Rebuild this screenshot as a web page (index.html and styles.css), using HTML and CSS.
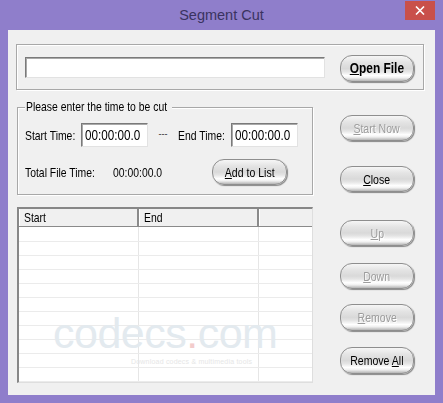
FILE: index.html
```html
<!DOCTYPE html>
<html>
<head>
<meta charset="utf-8">
<link rel="stylesheet" href="styles.css">
</head>
<body>
<div class="window">
  <div class="titlebar">
    <div class="title">Segment Cut</div>
    <div class="close-btn">
      <svg width="10" height="9" viewBox="0 0 10 9"><path d="M1 0.5 L9 8.5 M9 0.5 L1 8.5" stroke="#fff" stroke-width="1.6" fill="none"/></svg>
    </div>
  </div>
  <div class="client">
    <div class="filebox">
      <div class="field file-field"></div>
      <div class="btn btn-open"><span class="t"><u>O</u>pen File</span></div>
    </div>
    <div class="main">
      <div class="leftcol">
        <div class="group">
          <div class="legend"><span class="t tl">Please enter the time to be cut</span></div>
          <div class="row row1">
            <span class="lbl lbl-start"><span class="t tl">Start Time:</span></span>
            <div class="field time-field"><span class="t tl">00:00:00.0</span></div>
            <span class="dash">---</span>
            <span class="lbl lbl-end"><span class="t tl">End Time:</span></span>
            <div class="field time-field"><span class="t tl">00:00:00.0</span></div>
          </div>
          <div class="row row2">
            <span class="lbl lbl-total"><span class="t tl">Total File Time:</span></span>
            <span class="lbl lbl-totalval"><span class="t tl">00:00:00.0</span></span>
            <div class="btn btn-add"><span class="t"><u>A</u>dd to List</span></div>
          </div>
        </div>
        <div class="list">
          <div class="list-head">
            <div class="hcell c1"><span class="t tl">Start</span></div>
            <div class="hcell c2"><span class="t tl">End</span></div>
            <div class="hcell c3"></div>
          </div>
          <div class="list-body">
            <div class="lrow"><div class="cell c1"></div><div class="cell c2"></div><div class="cell c3"></div></div>
            <div class="lrow"><div class="cell c1"></div><div class="cell c2"></div><div class="cell c3"></div></div>
            <div class="lrow"><div class="cell c1"></div><div class="cell c2"></div><div class="cell c3"></div></div>
            <div class="lrow"><div class="cell c1"></div><div class="cell c2"></div><div class="cell c3"></div></div>
            <div class="lrow"><div class="cell c1"></div><div class="cell c2"></div><div class="cell c3"></div></div>
            <div class="lrow"><div class="cell c1"></div><div class="cell c2"></div><div class="cell c3"></div></div>
            <div class="lrow"><div class="cell c1"></div><div class="cell c2"></div><div class="cell c3"></div></div>
            <div class="lrow"><div class="cell c1"></div><div class="cell c2"></div><div class="cell c3"></div></div>
            <div class="lrow"><div class="cell c1"></div><div class="cell c2"></div><div class="cell c3"></div></div>
            <div class="lrow"><div class="cell c1"></div><div class="cell c2"></div><div class="cell c3"></div></div>
            <div class="lrow last"><div class="cell c1"></div><div class="cell c2"></div><div class="cell c3"></div></div>
          </div>
          <div class="watermark">
            <div class="wm-main">codecs<span class="wm-dot">.</span>com</div>
            <div class="wm-sub">Download codecs &amp; multimedia tools</div>
          </div>
        </div>
      </div>
      <div class="rightcol">
        <div class="btn disabled b-start"><span class="t"><u>S</u>tart Now</span></div>
        <div class="btn b-close"><span class="t"><u>C</u>lose</span></div>
        <div class="btn disabled b-up"><span class="t"><u>U</u>p</span></div>
        <div class="btn disabled b-down"><span class="t"><u>D</u>own</span></div>
        <div class="btn disabled b-remove"><span class="t"><u>R</u>emove</span></div>
        <div class="btn b-removeall"><span class="t">Remove <u>A</u>ll</span></div>
      </div>
    </div>
  </div>
</div>
</body>
</html>
```

FILE: styles.css
```css
* { box-sizing: border-box; }
html, body { margin: 0; padding: 0; }
body {
  width: 443px;
  height: 403px;
  overflow: hidden;
  font-family: "Liberation Sans", Arial, sans-serif;
  font-size: 13px;
  color: #000;
}
.t {
  display: inline-block;
  white-space: nowrap;
  transform: scaleX(0.8);
  transform-origin: center center;
}
.tl { transform-origin: left center; }
.window {
  width: 443px;
  height: 403px;
  background: #8f7ecb;
  display: flex;
  flex-direction: column;
}
.titlebar {
  height: 30px;
  display: grid;
  grid-template-columns: 1fr auto 1fr;
  align-items: start;
}
.title {
  grid-column: 2;
  font-size: 14.5px;
  color: #3a3360;
  padding-top: 7px;
  line-height: 17px;
}
.close-btn {
  grid-column: 3;
  justify-self: end;
  margin-right: 8px;
  margin-top: 1px;
  width: 30px;
  height: 19px;
  background: #c9504b;
  display: flex;
  align-items: center;
  justify-content: center;
}
.client {
  margin: 0 8px;
  height: 365px;
  background: #f0f0f0;
  padding: 14px 11px 0 8px;
}
.filebox {
  height: 46px;
  border: 1px solid #a8a8a8;
  box-shadow: inset 1px 1px 0 #fff, 1px 1px 0 #fff;
  display: flex;
  align-items: flex-start;
  padding-left: 8px;
}
.field {
  background: #fff;
  border-style: solid;
  border-width: 1px;
  border-color: #7a7a7a #e2e2e2 #e2e2e2 #7a7a7a;
  box-shadow: inset 1px 1px 0 #a9a9a9;
}
.file-field {
  width: 300px;
  height: 21px;
  margin-top: 12px;
}
.btn {
  width: 74px;
  height: 26px;
  border: 1px solid #8e8e8e;
  border-radius: 12px;
  background: linear-gradient(to bottom, #f6f6f6 0%, #e4e4e4 25%, #d9d9d9 50%, #e4e4e4 62%, #ffffff 78%, #f0f0f0 87%, #b4b4b4 100%);
  box-shadow: 1px 1px 1px #888;
  display: flex;
  align-items: center;
  justify-content: center;
  font-size: 13px;
  line-height: 15px;
  color: #000;
}
.btn .t { transform: scaleX(0.81); }
.btn.disabled {
  color: #9c9c9c;
  text-shadow: 1px 1px 0 #fff;
}
.btn-open {
  margin-left: 15px;
  margin-top: 10px;
  height: 27px;
  font-weight: bold;
  font-size: 14px;
}
.btn-open .t { transform: scaleX(0.85); }
.main {
  display: flex;
  margin-top: 17px;
}
.leftcol {
  margin-left: 1px;
  width: 296px;
  display: flex;
  flex-direction: column;
}
.group {
  position: relative;
  height: 88px;
  border: 1px solid #a8a8a8;
  box-shadow: inset 1px 1px 0 #fff, 1px 1px 0 #fff;
  padding: 15px 0 0 7px;
}
.legend {
  position: absolute;
  top: -9px;
  left: 7px;
  width: 147px;
  height: 16px;
  padding-left: 1px;
  background: #f0f0f0;
  line-height: 16px;
}
.legend .t { transform: scaleX(0.8); }
.row {
  display: flex;
  align-items: center;
}
.row1 { height: 24px; }
.row2 { margin-top: 12px; height: 26px; }
.lbl { line-height: 15px; white-space: nowrap; }
.lbl-start { width: 56px; }
.lbl-end { width: 53px; }
.lbl-total { width: 88px; }
.lbl-totalval { width: 99px; }
.dash {
  width: 30px;
  text-align: center;
  font-size: 9px;
  padding-bottom: 3px;
  color: #222;
}
.time-field {
  width: 67px;
  height: 24px;
  font-size: 15px;
  line-height: 21px;
  padding-left: 3px;
  overflow: hidden;
}
.time-field .t { transform: scaleX(0.78); }
.btn-add { width: 75px; }
.list {
  position: relative;
  margin-top: 12px;
  height: 176px;
  border-style: solid;
  border-width: 2px 1px 1px 2px;
  border-color: #878787 #dedede #dedede #878787;
  background: #fff;
  overflow: hidden;
}
.list-head {
  display: flex;
  height: 18px;
  background: #f0f0f0;
  border-bottom: 1px solid #8a8a8a;
}
.hcell {
  line-height: 17px;
  padding-left: 5px;
  border-right: 2px solid #8a8a8a;
  box-shadow: inset 1px 0 0 #fff;
}
.c1 { width: 120px; }
.c2 { width: 120px; }
.c3 { flex: 1; }
.hcell.c3 { border-right: none; }
.list-body {
  display: flex;
  flex-direction: column;
}
.lrow {
  display: flex;
  height: 14px;
  border-bottom: 1px solid #ebebeb;
}
.lrow:first-child { height: 15px; }
.cell {
  border-right: 1px solid #e6e6e6;
}
.cell.c1, .cell.c2 { width: 120px; }
.cell.c3 { border-right: none; }
.watermark {
  position: absolute;
  left: 34px;
  top: 102px;
  width: 240px;
  pointer-events: none;
}
.wm-main {
  font-size: 43px;
  line-height: 44px;
  height: 42px;
  color: #e3eaef;
  letter-spacing: -0.5px;
}
.wm-dot { color: #f3cccc; }
.wm-sub {
  font-size: 7px;
  line-height: 8px;
  color: #e6e6e6;
  margin-left: 78px;
  margin-top: 5px;
  letter-spacing: 0.2px;
  white-space: nowrap;
}
.rightcol {
  margin-left: 27px;
  display: flex;
  flex-direction: column;
}
.b-start { margin-top: 8px; }
.b-close { margin-top: 25px; }
.b-up { margin-top: 28px; }
.b-down { margin-top: 17px; }
.b-remove { margin-top: 15px; height: 27px; }
.b-removeall { margin-top: 16px; height: 27px; }
```
